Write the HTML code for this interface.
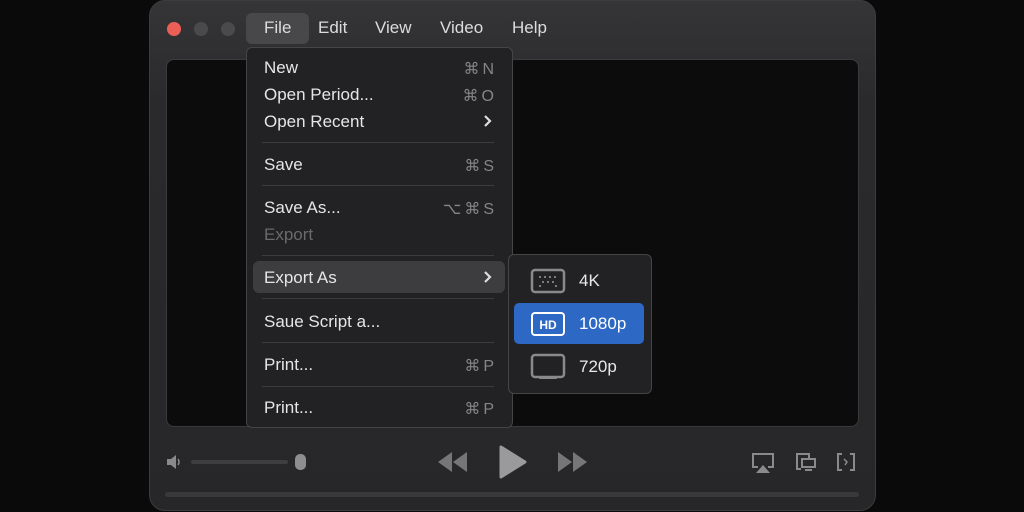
<!DOCTYPE html>
<html><head><meta charset="utf-8"><style>
*{margin:0;padding:0;box-sizing:border-box}
body{width:1024px;height:512px;background:#0a0a0a;font-family:"Liberation Sans",sans-serif;position:relative;overflow:hidden;color:#e8e8e8}
.a{position:absolute}
.win{left:149px;top:0;width:727px;height:511px;border-radius:16px;background:linear-gradient(#353537,#2a2a2c 20%,#272729);border:1px solid #3c3c3e}
.video{left:166px;top:59px;width:693px;height:368px;background:#0c0c0d;border:1px solid #3a3a3c;border-radius:8px}
.dot{width:14px;height:14px;border-radius:50%;top:22px}
.mt{top:18px;font-size:17px;color:#dcdcdc}
.menu{left:246px;top:47px;width:267px;height:381px;background:#222224;border:1px solid #454547;border-radius:6px}
.it{left:264px;font-size:17px;color:#e6e6e6}
.sc{right:530px;font-size:16px;color:#858587;text-align:right;letter-spacing:3px;margin-right:-3px}
.sep{left:262px;width:232px;height:1px;background:#3c3c3e}
.sub{left:508px;top:254px;width:144px;height:140px;background:#222224;border:1px solid #454547;border-radius:6px}
</style></head><body>
<div class="a win"></div>
<div class="a video"></div>
<div class="a dot" style="left:167px;background:#ec5f57"></div>
<div class="a dot" style="left:194px;background:#4a4a4c"></div>
<div class="a dot" style="left:221px;background:#4a4a4c"></div>
<div class="a" style="left:246px;top:13px;width:63px;height:31px;background:#48484a;border-radius:6px"></div>
<div class="a mt" style="left:264px">File</div>
<div class="a mt" style="left:318px">Edit</div>
<div class="a mt" style="left:375px">View</div>
<div class="a mt" style="left:440px">Video</div>
<div class="a mt" style="left:512px">Help</div>

<div class="a menu"></div>
<div class="a it" style="top:58px">New</div><div class="a sc" style="top:59px">⌘N</div>
<div class="a it" style="top:85px">Open Period...</div><div class="a sc" style="top:86px">⌘O</div>
<div class="a it" style="top:112px">Open Recent</div>
<svg class="a" style="left:483px;top:114px" width="10" height="14"><path d="M2 2l5 5-5 5" fill="none" stroke="#ddd" stroke-width="2.2"/></svg>
<div class="a sep" style="top:142px"></div>
<div class="a it" style="top:155px">Save</div><div class="a sc" style="top:156px">⌘S</div>
<div class="a sep" style="top:185px"></div>
<div class="a it" style="top:198px">Save As...</div><div class="a sc" style="top:199px">⌥⌘S</div>
<div class="a it" style="top:225px;color:#6a6a6c">Export</div>
<div class="a sep" style="top:255px"></div>
<div class="a" style="left:253px;top:261px;width:252px;height:32px;background:#3d3d3f;border-radius:6px"></div>
<div class="a it" style="top:268px">Export As</div>
<svg class="a" style="left:483px;top:270px" width="10" height="14"><path d="M2 2l5 5-5 5" fill="none" stroke="#ddd" stroke-width="2.2"/></svg>
<div class="a sep" style="top:298px"></div>
<div class="a it" style="top:312px">Saue Script a...</div>
<div class="a sep" style="top:342px"></div>
<div class="a it" style="top:355px">Print...</div><div class="a sc" style="top:356px">⌘P</div>
<div class="a sep" style="top:386px"></div>
<div class="a it" style="top:398px">Print...</div><div class="a sc" style="top:399px">⌘P</div>

<div class="a sub"></div>
<div class="a" style="left:514px;top:303px;width:130px;height:41px;background:#2d68c4;border-radius:5px"></div>
<svg class="a" style="left:530px;top:268px" width="36" height="26"><rect x="2" y="2" width="32" height="22" rx="3" fill="none" stroke="#8a8a8c" stroke-width="2.5"/><g fill="#9a9a9c"><circle cx="10" cy="9" r="1"/><circle cx="15" cy="9" r="1"/><circle cx="20" cy="9" r="1"/><circle cx="25" cy="9" r="1"/><circle cx="13" cy="14" r="1"/><circle cx="18" cy="14" r="1"/><circle cx="23" cy="14" r="1"/><circle cx="10" cy="18" r="1"/><circle cx="26" cy="18" r="1"/></g></svg>
<div class="a" style="left:579px;top:271px;font-size:17px">4K</div>
<svg class="a" style="left:530px;top:311px" width="36" height="26"><rect x="2" y="2" width="32" height="22" rx="3" fill="none" stroke="#fff" stroke-width="2"/><text x="18" y="18" font-family="Liberation Sans" font-weight="bold" font-size="12" fill="#fff" text-anchor="middle">HD</text></svg>
<div class="a" style="left:579px;top:314px;font-size:17px;color:#fff">1080p</div>
<svg class="a" style="left:530px;top:353px" width="36" height="28"><rect x="2" y="2" width="32" height="22" rx="3" fill="none" stroke="#8a8a8c" stroke-width="2.5"/><rect x="9" y="23" width="18" height="3" rx="1" fill="#8a8a8c"/></svg>
<div class="a" style="left:579px;top:357px;font-size:17px">720p</div>

<svg class="a" style="left:165px;top:454px" width="20" height="16"><path d="M2 5h4l5-4v14l-5-4H2z" fill="#8a8a8c"/><path d="M13 5q2 3 0 6" stroke="#8a8a8c" stroke-width="1.5" fill="none"/></svg>
<div class="a" style="left:191px;top:460px;width:97px;height:4px;background:#3e3e40;border-radius:2px"></div>
<div class="a" style="left:295px;top:454px;width:11px;height:16px;background:#8e8e90;border-radius:5px"></div>
<svg class="a" style="left:435px;top:450px" width="34" height="24"><path d="M17 2L3 12l14 10zM32 2L18 12l14 10z" fill="#767678"/></svg>
<svg class="a" style="left:497px;top:444px" width="32" height="36"><path d="M4 3L28 18 4 33z" fill="#9a9a9c" stroke="#9a9a9c" stroke-width="3" stroke-linejoin="round"/></svg>
<svg class="a" style="left:556px;top:450px" width="34" height="24"><path d="M2 2l14 10L2 22zM17 2l14 10-14 10z" fill="#767678"/></svg>
<svg class="a" style="left:751px;top:452px" width="24" height="22"><path d="M7 15H2V2h20v13h-5" fill="none" stroke="#8a8a8c" stroke-width="2"/><path d="M5 21l7-8 7 8z" fill="#8a8a8c"/></svg>
<svg class="a" style="left:795px;top:452px" width="22" height="20"><path d="M6 17H2V2h12v4" fill="none" stroke="#8a8a8c" stroke-width="2"/><rect x="7" y="7" width="13" height="8" fill="none" stroke="#8a8a8c" stroke-width="2"/><path d="M10 18h7" stroke="#8a8a8c" stroke-width="2"/></svg>
<svg class="a" style="left:836px;top:452px" width="20" height="20"><path d="M6 2H2v16h4M14 2h4v16h-4" fill="none" stroke="#8a8a8c" stroke-width="2"/><path d="M8 7l3 3-2 3" fill="none" stroke="#8a8a8c" stroke-width="1.5"/></svg>
<div class="a" style="left:165px;top:492px;width:694px;height:5px;background:#39393b;border-radius:3px"></div>
</body></html>
